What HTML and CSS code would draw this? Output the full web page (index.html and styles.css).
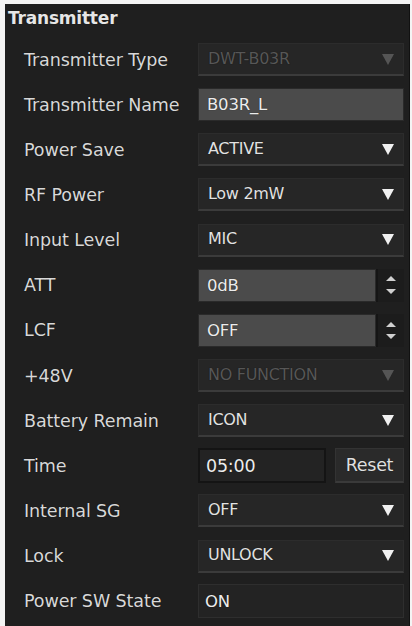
FILE: index.html
```html
<!DOCTYPE html>
<html>
<head>
<meta charset="utf-8">
<link rel="stylesheet" href="styles.css">
</head>
<body>
<div class="panel">
  <div class="title">Transmitter</div>
  <div class="rows">
    <div class="row"><span class="label">Transmitter Type</span>
      <div class="select disabled"><span>DWT-B03R</span><span class="arrow"></span></div></div>
    <div class="row"><span class="label">Transmitter Name</span>
      <div class="input"><span class="big">B03R_L</span></div></div>
    <div class="row"><span class="label">Power Save</span>
      <div class="select"><span>ACTIVE</span><span class="arrow"></span></div></div>
    <div class="row"><span class="label">RF Power</span>
      <div class="select"><span>Low 2mW</span><span class="arrow"></span></div></div>
    <div class="row"><span class="label">Input Level</span>
      <div class="select"><span>MIC</span><span class="arrow"></span></div></div>
    <div class="row"><span class="label">ATT</span>
      <div class="spin"><div class="input"><span class="big">0dB</span></div><div class="spinbtns"><span class="up"></span><span class="down"></span></div></div></div>
    <div class="row"><span class="label">LCF</span>
      <div class="spin"><div class="input"><span class="big">OFF</span></div><div class="spinbtns"><span class="up"></span><span class="down"></span></div></div></div>
    <div class="row"><span class="label">+48V</span>
      <div class="select disabled"><span>NO FUNCTION</span><span class="arrow"></span></div></div>
    <div class="row"><span class="label">Battery Remain</span>
      <div class="select"><span>ICON</span><span class="arrow"></span></div></div>
    <div class="row"><span class="label">Time</span>
      <div class="timebox"><div class="time"><span class="big">05:00</span></div><div class="reset">Reset</div></div></div>
    <div class="row"><span class="label">Internal SG</span>
      <div class="select"><span>OFF</span><span class="arrow"></span></div></div>
    <div class="row"><span class="label">Lock</span>
      <div class="select"><span>UNLOCK</span><span class="arrow"></span></div></div>
    <div class="row"><span class="label">Power SW State</span>
      <div class="state"><span class="big">ON</span></div></div>
  </div>
</div>
</body>
</html>
```
FILE: styles.css
```css
html, body {
  margin: 0;
  padding: 0;
  background: #f4f4f4;
}
body {
  width: 412px;
  height: 626px;
  overflow: hidden;
  font-family: "DejaVu Sans", "Open Sans", sans-serif;
}
.panel {
  margin: 4px 2px 0 5px;
  height: 622px;
  background: #1f1f1f;
  border-right: 1px solid #111;
  box-sizing: border-box;
  color: #dcdcdc;
  text-shadow: 0 0 1px rgba(0, 0, 0, 0.6);
}
.title {
  height: 33px;
  line-height: 29px;
  padding-left: 3px;
  font-weight: bold;
  font-size: 17px;
  letter-spacing: -0.2px;
  color: #e6e6e6;
}
.rows {
  display: flex;
  flex-direction: column;
}
.row {
  height: 45.15px;
  display: grid;
  grid-template-columns: 193px 1fr;
  align-items: center;
  padding-right: 5px;
}
.label {
  padding-left: 19px;
  font-size: 17.5px;
  color: #d8d8d8;
  letter-spacing: -0.1px;
  white-space: nowrap;
}
.select {
  height: 33px;
  background: #262626;
  border: 1px solid #2c2c2c;
  border-bottom: 2px solid #3b3b3b;
  box-sizing: border-box;
  display: flex;
  align-items: center;
  justify-content: space-between;
  padding: 0 9px 2px 9px;
  font-size: 16px;
  letter-spacing: -0.3px;
  color: #e2e2e2;
}
.select.disabled {
  color: #575757;
}
.arrow {
  width: 0;
  height: 0;
  border-left: 6px solid transparent;
  border-right: 6px solid transparent;
  border-top: 11px solid #f0f0f0;
  margin-top: 2px;
}
.disabled .arrow {
  border-top-color: #555;
}
.input {
  height: 33px;
  background: #4b4b4b;
  border: 1px solid #2a2a2a;
  box-sizing: border-box;
  display: flex;
  align-items: center;
  padding-left: 8px;
}
.big {
  font-size: 16.5px;
  color: #ececec;
  letter-spacing: -0.2px;
}
.spin {
  display: grid;
  grid-template-columns: 1fr 28px;
}
.spinbtns {
  display: flex;
  flex-direction: column;
  align-items: center;
  justify-content: space-evenly;
  background: #1c1c1c;
  border-left: 2px solid #151515;
}
.up, .down {
  width: 0;
  height: 0;
  border-left: 5px solid transparent;
  border-right: 5px solid transparent;
}
.up { border-bottom: 5px solid #d0d0d0; }
.down { border-top: 5px solid #d0d0d0; }
.timebox {
  display: grid;
  grid-template-columns: 128px 1fr;
  gap: 9px;
}
.time {
  height: 35px;
  background: #232323;
  border: 2px solid #141414;
  box-sizing: border-box;
  display: flex;
  align-items: center;
  padding-left: 6px;
}
.time .big { font-size: 17.5px; }
.reset {
  height: 35px;
  background: #2a2a2a;
  border: 1px solid #333;
  border-bottom: 2px solid #3a3a3a;
  box-sizing: border-box;
  display: flex;
  align-items: center;
  justify-content: center;
  font-size: 17.5px;
  letter-spacing: -0.3px;
  color: #e0e0e0;
}
.state {
  height: 34px;
  background: #232323;
  border: 1px solid #2e2e2e;
  box-sizing: border-box;
  display: flex;
  align-items: center;
  padding-left: 6px;
}
.state .big { font-size: 16.5px; }
```
